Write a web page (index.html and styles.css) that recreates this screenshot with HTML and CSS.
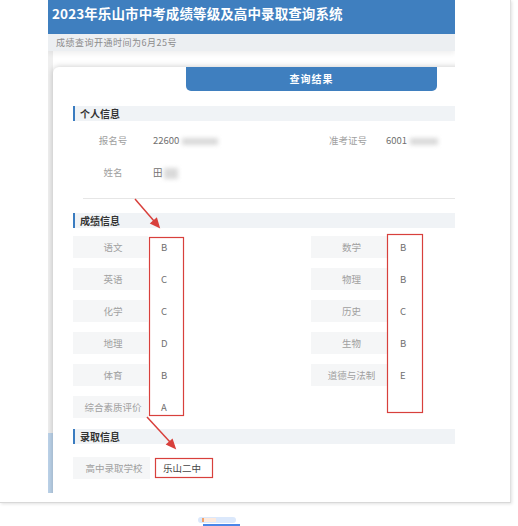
FILE: index.html
```html
<!DOCTYPE html>
<html lang="zh-CN">

<head>
  <meta charset="UTF-8" />
  <title>成绩查询</title>
  <link rel="stylesheet" href="styles.css">
</head>

<body>
  <div class="frame">
    <div class="shot">
      <div class="topbar">
        <h1>2023年乐山市中考成绩等级及高中录取查询系统</h1>
      </div>
      <div class="notice">成绩查询开通时间为6月25号</div>

      <div class="stage">
        <div class="card">
          <div class="tab">查询结果</div>

          <!-- 个人信息 -->
          <div class="sec-title">个人信息</div>
          <div class="info">
            <span class="lbl">报名号</span>
            <span class="val">22600<i class="blur b1"></i></span>
            <span class="lbl">准考证号</span>
            <span class="val">6001<i class="blur b2"></i></span>
            <span class="lbl">姓名</span>
            <span class="val">田<i class="blur b3"></i></span>
          </div>
          <div class="divider"></div>

          <!-- 成绩信息 -->
          <div class="sec-title">成绩信息</div>
          <div class="grades">
            <span class="lbl">语文</span><span class="val">B</span>
            <span class="lbl">数学</span><span class="val">B</span>
            <span class="lbl">英语</span><span class="val">C</span>
            <span class="lbl">物理</span><span class="val">B</span>
            <span class="lbl">化学</span><span class="val">C</span>
            <span class="lbl">历史</span><span class="val">C</span>
            <span class="lbl">地理</span><span class="val">D</span>
            <span class="lbl">生物</span><span class="val">B</span>
            <span class="lbl">体育</span><span class="val">B</span>
            <span class="lbl">道德与法制</span><span class="val">E</span>
            <span class="lbl">综合素质评价</span><span class="val">A</span>
          </div>

          <!-- 录取信息 -->
          <div class="sec-title">录取信息</div>
          <div class="admit">
            <span class="lbl">高中录取学校</span>
            <span class="val">乐山二中</span>
          </div>
        </div>
      </div>
    </div>
  </div>

  <div class="dock">
    <div class="dock-top"><i></i></div>
    <div class="dock-bar"></div>
  </div>

  <!-- 标注 -->
  <svg class="marks" width="518" height="526" viewBox="0 0 518 526">
    <g fill="none" stroke="#d8403c" stroke-width="1.2">
      <rect x="149.5" y="237.5" width="34" height="178" />
      <rect x="387.5" y="234.5" width="35" height="178" />
      <rect x="155.5" y="458.5" width="57" height="19" />
    </g>
    <g stroke="#d8403c" stroke-width="1.5" fill="#d8403c">
      <line x1="135" y1="199" x2="154" y2="221" />
      <polygon points="159,227 151.1,223.2 156.5,218.6" />
      <line x1="147" y1="417" x2="170" y2="442" />
      <polygon points="175,448 167,444.4 172.2,439.7" />
    </g>
  </svg>
</body>

</html>
```

FILE: styles.css
```css
/* --- BASE --- */
* {
  margin: 0;
  padding: 0;
  box-sizing: border-box;
}

body {
  width: 518px;
  height: 526px;
  overflow: hidden;
  background: #fff;
  position: relative;
  font-family: "Noto Sans CJK SC", "Noto Sans", sans-serif;
}

/* --- MOLDURA --- */
.frame {
  width: 511px;
  height: 503px;
  background: #fff;
  border-right: 1px solid #e0e0e0;
  border-bottom: 1px solid #d8d8d8;
  box-shadow: 1px 1px 3px rgba(0, 0, 0, 0.12);
  padding-left: 48px;
}

.shot {
  width: 407px;
  height: 493px;
  overflow: hidden;
}

/* --- TOPO --- */
.topbar {
  height: 34px;
  background: #3f7fbf;
  padding: 5px 0 0 4px;
}

.topbar h1 {
  font-size: 13.5px;
  line-height: 16px;
  letter-spacing: 0.1px;
  color: #fff;
  font-weight: 700;
}

.notice {
  position: relative;
  height: 17px;
  line-height: 17px;
  background: #eceff2;
  padding-left: 8px;
  font-size: 9px;
  letter-spacing: 0.5px;
  color: #8c8c8c;
  box-shadow: 0 3px 5px rgba(0, 0, 0, 0.06);
}

.stage {
  height: 442px;
  padding: 16px 0 0 5px;
  background: linear-gradient(to bottom, #efefef 0, #efefef 382px, #bcd3ea 382px) left top / 5px 100% no-repeat, #fff;
}

/* --- CARTAO --- */
.card {
  width: 410px;
  height: 460px;
  background: #fff;
  border-radius: 6px 0 0 0;
  box-shadow: 0 0 6px rgba(0, 0, 0, 0.22);
  padding-left: 20px;
}

.tab {
  margin-left: 113px;
  width: 251px;
  height: 24px;
  line-height: 24px;
  background: #3f7fbf;
  border-radius: 0 0 5px 5px;
  text-align: center;
  color: #fff;
  font-size: 10px;
  font-weight: 700;
  letter-spacing: 1px;
}

.sec-title {
  height: 15px;
  line-height: 15px;
  margin-top: 15px;
  background: #f0f3f6;
  border-left: 2.5px solid #3a7cc0;
  padding-left: 5px;
  font-size: 10px;
  font-weight: 700;
  color: #333;
}

.lbl,
.val {
  font-size: 9.5px;
  white-space: nowrap;
}

.lbl {
  color: #a0a0a0;
  text-align: center;
}

.val {
  color: #707070;
}

/* --- INFO PESSOAL --- */
.info {
  display: grid;
  grid-template-columns: 80px 157px 76px 1fr;
  grid-auto-rows: 32px;
  align-items: center;
  margin-top: 3px;
}

.blur {
  display: inline-block;
  vertical-align: middle;
  height: 7px;
  margin-left: 3px;
  background: #dadada;
  filter: blur(2px);
}

.b1 {
  width: 36px;
}

.b2 {
  width: 28px;
}

.b3 {
  width: 14px;
  height: 11px;
  margin-left: 1px;
}

.divider {
  height: 1px;
  margin: 10px 0 0 10px;
  background: #e6e6e6;
}

.divider + .sec-title {
  margin-top: 14px;
}

/* --- NOTAS --- */
.grades {
  display: grid;
  grid-template-columns: 75px 163px 76px 1fr;
  grid-auto-rows: 22px;
  row-gap: 10px;
  align-items: center;
  margin-top: 8px;
}

.grades .lbl,
.admit .lbl {
  height: 22px;
  line-height: 22px;
  background: #f5f6f7;
  padding-left: 5px;
}

.grades .val {
  padding-left: 13px;
}

.grades + .sec-title {
  margin-top: 11px;
}

/* --- ADMISSAO --- */
.admit {
  display: grid;
  grid-template-columns: 77px 1fr;
  align-items: center;
  margin-top: 13px;
}

.admit .val {
  padding-left: 13px;
  color: #444;
}

/* --- RODAPE --- */
.dock {
  margin: 14px 0 0 198px;
  width: 42px;
}

.dock-top {
  width: 38px;
  height: 6px;
  background: #dbe8fb;
  border-radius: 3px;
  padding: 1px 0 0 4px;
}

.dock-top i {
  display: block;
  width: 14px;
  height: 4px;
  background: #fde9dc;
  border-left: 2px solid #f3a36d;
}

.dock-bar {
  width: 37px;
  height: 3px;
  margin: 1px 0 0 5px;
  background: #4a86e8;
}

/* --- ANOTACOES --- */
.marks {
  position: absolute;
  left: 0;
  top: 0;
  pointer-events: none;
}
```
